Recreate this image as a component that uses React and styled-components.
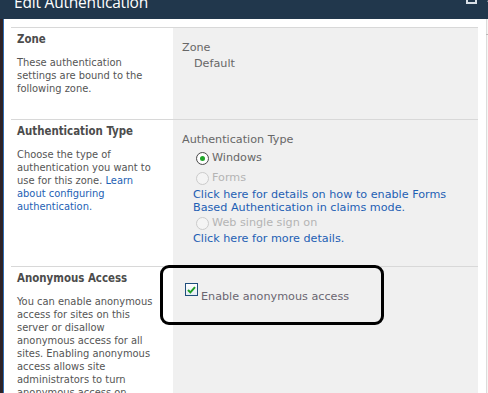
import React from 'react'
import styled, { createGlobalStyle } from 'styled-components'

const GlobalStyle = createGlobalStyle`
  html, body {
    margin: 0;
    padding: 0;
    background: #fff;
  }
  body {
    width: 488px;
    height: 393px;
    overflow: hidden;
  }
`

const LEFT_FONT = '"DejaVu Sans Condensed", "DejaVu Sans", sans-serif'
const RIGHT_FONT = '"DejaVu Sans", Verdana, sans-serif'
const LINK = '#1e5fb4'

const Dialog = styled.div`
  width: 488px;
  height: 393px;
  overflow: hidden;
  display: flex;
  flex-direction: column;
  background: #fff;
`

const TitleBar = styled.div`
  flex: none;
  height: 19px;
  display: flex;
  align-items: flex-start;
  padding-left: 14px;
  overflow: hidden;
  background: #21374c;
`

const Title = styled.h1`
  flex: 1;
  margin: -8px 0 0;
  font: 400 15.5px/20px "Open Sans", sans-serif;
  letter-spacing: -0.2px;
  color: #fff;
  white-space: nowrap;
`

const MaxButton = styled.span`
  flex: none;
  width: 11px;
  height: 11px;
  margin: -7px 9px 0 0;
  box-sizing: border-box;
  border: 2px solid #d9dfe6;
`

const CloseButton = styled.svg`
  flex: none;
  margin: -8px -10px 0 0;
`

const Frame = styled.div`
  flex: 1;
  min-height: 0;
  display: flex;
`

const LeftEdge = styled.div`
  flex: none;
  width: 4px;
  background: linear-gradient(to right, #2d2327 0 3px, #2f6db3 3px 4px);
`

const Body = styled.div`
  flex: 1;
  padding: 8px 8px 0 7px;
`

const ScrollEdge = styled.div`
  flex: none;
  width: 1px;
  position: relative;
  border-left: 1px solid #dcdcdc;
  background: #f6f6f3;

  &::before {
    content: '';
    position: absolute;
    top: 15px;
    left: -1px;
    width: 2px;
    height: 1px;
    background: #b8b8b8;
  }
`

const Section = styled.section`
  position: relative;
  display: grid;
  grid-template-columns: 162px 1fr;
  box-sizing: border-box;
  min-height: ${p => p.$height}px;
  border-top: 1px solid #d8d8d8;
`

const InfoCell = styled.div`
  padding: 5px 17px 0 6px;
  background: #fff;
`

const Heading = styled.h3`
  margin: 0;
  font: 700 11.4px/13px ${LEFT_FONT};
  color: #4c4c4c;
`

const Description = styled.p`
  margin: 10px 0 0;
  font: 400 11px/13px ${LEFT_FONT};
  color: #555;
`

const Link = styled.a`
  color: ${LINK};
  text-decoration: none;
`

const ControlCell = styled.div`
  padding: 12px 0 0 9px;
  background: #f0f0f0;
  font: 400 11.2px/16px ${RIGHT_FONT};
  color: #676767;
`

const FieldLabel = styled.div`
  line-height: 16px;
`

const FieldValue = styled.div`
  padding-left: 12px;
  line-height: 16px;
`

const RadioRow = styled.label`
  display: flex;
  align-items: center;
  height: ${p => (p.$tight ? 17 : 20)}px;
  padding-left: 14px;
  color: ${p => (p.$disabled ? '#b4b4b4' : '#676767')};
`

const Radio = styled.span`
  flex: none;
  position: relative;
  width: 13px;
  height: 13px;
  margin-right: 3px;
  box-sizing: border-box;
  border-radius: 50%;
  border: 1px solid ${p => (p.$disabled ? '#cbcbcb' : '#4a4a4a')};
  background: ${p => (p.$disabled ? '#f4f4f4' : 'radial-gradient(circle, #fff 55%, #e4e4e4)')};

  &::after {
    content: '';
    display: ${p => (p.$checked ? 'block' : 'none')};
    position: absolute;
    top: 3px;
    left: 3px;
    width: 5px;
    height: 5px;
    border-radius: 50%;
    background: #21a62b;
  }
`

const HelpLink = styled.a`
  display: block;
  padding-left: 11px;
  line-height: 13.3px;
  color: ${LINK};
  text-decoration: none;
`

const CheckRow = styled.label`
  display: flex;
  align-items: flex-start;
  padding-left: 3px;
`

const CheckBox = styled.span`
  flex: none;
  display: flex;
  align-items: center;
  justify-content: center;
  width: 13px;
  height: 13px;
  margin-top: 4px;
  box-sizing: border-box;
  border: 1px solid #1f4e7c;
  background: linear-gradient(#ffffff, #e3ebf3);
`

const CheckLabel = styled.span`
  margin: 11px 0 0 3px;
  line-height: 14px;
  color: #6a6670;
`

const Callout = styled.div`
  position: absolute;
  top: -2px;
  left: 149px;
  width: 224px;
  height: 60px;
  box-sizing: border-box;
  border: 3px solid #000;
  border-radius: 9px;
  pointer-events: none;
`

export default function App() {
  return (
    <>
      <GlobalStyle />
      <Dialog>
        <TitleBar>
          <Title>Edit Authentication</Title>
          <MaxButton />
          <CloseButton width="12" height="12" viewBox="0 0 12 12">
            <path d="M2 2 L10 10 M10 2 L2 10" stroke="#f2f4f6" strokeWidth="2" />
          </CloseButton>
        </TitleBar>
        <Frame>
          <LeftEdge />
          <Body>
            <Section $height={92}>
              <InfoCell>
                <Heading>Zone</Heading>
                <Description>
                  These authentication settings are bound to the following zone.
                </Description>
              </InfoCell>
              <ControlCell>
                <FieldLabel>Zone</FieldLabel>
                <FieldValue>Default</FieldValue>
              </ControlCell>
            </Section>

            <Section $height={147}>
              <InfoCell>
                <Heading>Authentication Type</Heading>
                <Description>
                  Choose the type of authentication you want to use for this zone.{' '}
                  <Link href="#">Learn about configuring authentication.</Link>
                </Description>
              </InfoCell>
              <ControlCell>
                <FieldLabel>Authentication Type</FieldLabel>
                <RadioRow>
                  <Radio $checked />
                  Windows
                </RadioRow>
                <RadioRow $disabled>
                  <Radio $disabled />
                  Forms
                </RadioRow>
                <HelpLink href="#">
                  Click here for details on how to enable Forms
                  <br />
                  Based Authentication in claims mode.
                </HelpLink>
                <RadioRow $disabled $tight>
                  <Radio $disabled />
                  Web single sign on
                </RadioRow>
                <HelpLink href="#">Click here for more details.</HelpLink>
              </ControlCell>
            </Section>

            <Section $height={140}>
              <InfoCell>
                <Heading>Anonymous Access</Heading>
                <Description>
                  You can enable anonymous access for sites on this server or disallow
                  anonymous access for all sites. Enabling anonymous access allows site
                  administrators to turn anonymous access on.
                </Description>
              </InfoCell>
              <ControlCell>
                <CheckRow>
                  <CheckBox>
                    <svg width="9" height="8" viewBox="0 0 9 8">
                      <path d="M1 4 L3.4 6.4 L8 1.2" fill="none" stroke="#1e9e24" strokeWidth="2" />
                    </svg>
                  </CheckBox>
                  <CheckLabel>Enable anonymous access</CheckLabel>
                </CheckRow>
              </ControlCell>
              <Callout />
            </Section>
          </Body>
          <ScrollEdge />
        </Frame>
      </Dialog>
    </>
  )
}
